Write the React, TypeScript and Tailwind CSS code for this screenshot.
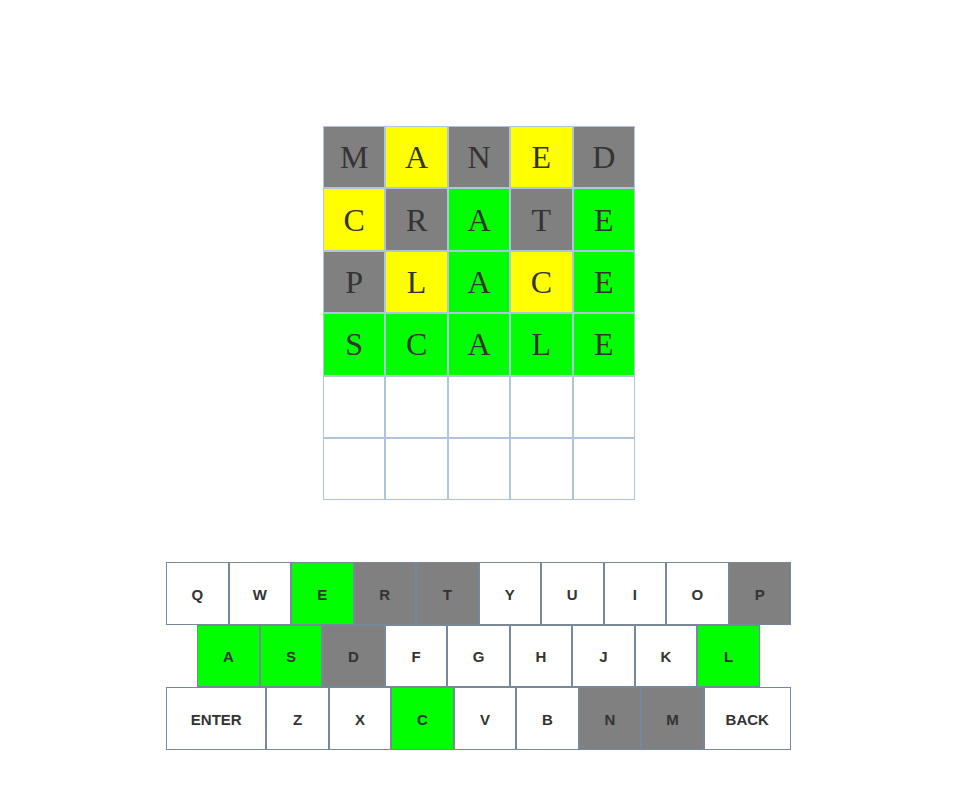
import React from "react";

type C = "g" | "y" | "x" | "w";

const rows: { l: string; c: C }[][] = [
  [
    { l: "M", c: "x" },
    { l: "A", c: "y" },
    { l: "N", c: "x" },
    { l: "E", c: "y" },
    { l: "D", c: "x" },
  ],
  [
    { l: "C", c: "y" },
    { l: "R", c: "x" },
    { l: "A", c: "g" },
    { l: "T", c: "x" },
    { l: "E", c: "g" },
  ],
  [
    { l: "P", c: "x" },
    { l: "L", c: "y" },
    { l: "A", c: "g" },
    { l: "C", c: "y" },
    { l: "E", c: "g" },
  ],
  [
    { l: "S", c: "g" },
    { l: "C", c: "g" },
    { l: "A", c: "g" },
    { l: "L", c: "g" },
    { l: "E", c: "g" },
  ],
  [
    { l: "", c: "w" },
    { l: "", c: "w" },
    { l: "", c: "w" },
    { l: "", c: "w" },
    { l: "", c: "w" },
  ],
  [
    { l: "", c: "w" },
    { l: "", c: "w" },
    { l: "", c: "w" },
    { l: "", c: "w" },
    { l: "", c: "w" },
  ],
];

const bg: Record<C, string> = {
  g: "bg-[#00ff00]",
  y: "bg-[#ffff00]",
  x: "bg-[#808080]",
  w: "bg-white",
};

const keyStates: Record<string, C> = {
  E: "g",
  R: "x",
  T: "x",
  P: "x",
  A: "g",
  S: "g",
  D: "x",
  L: "g",
  C: "g",
  N: "x",
  M: "x",
};

const kb = [
  ["Q", "W", "E", "R", "T", "Y", "U", "I", "O", "P"],
  ["A", "S", "D", "F", "G", "H", "J", "K", "L"],
  ["ENTER", "Z", "X", "C", "V", "B", "N", "M", "BACK"],
];

function Key({ k }: { k: string }) {
  const st = keyStates[k] ?? "w";
  const w = k === "ENTER" ? "w-[100px]" : k === "BACK" ? "w-[87px]" : "w-[62.5px]";
  return (
    <div
      className={`${w} h-[62.5px] border border-[#778899] ${bg[st]} flex items-center justify-center pt-[3px] text-[15px] font-bold text-[#333333]`}
      style={{ fontFamily: '"Liberation Sans", Arial, sans-serif' }}
    >
      {k}
    </div>
  );
}

export default function App() {
  return (
    <div className="min-h-[801px] bg-white flex flex-col items-center pt-[126px]">
      <div className="flex flex-col w-[312px] mr-[2px]">
        {rows.map((r, i) => (
          <div key={i} className="flex">
            {r.map((c, j) => (
              <div
                key={j}
                className={`w-[62.4px] h-[62.4px] border border-[#b0c4de] ${bg[c.c]} flex items-center justify-center text-[32px] text-[#333333]`}
                style={{ fontFamily: '"Liberation Serif", "Times New Roman", serif' }}
              >
                {c.l}
              </div>
            ))}
          </div>
        ))}
      </div>
      <div className="mt-[62px] flex flex-col items-center w-[625px] mr-[3px]">
        {kb.map((r, i) => (
          <div key={i} className="flex">
            {r.map((k) => (
              <Key key={k} k={k} />
            ))}
          </div>
        ))}
      </div>
    </div>
  );
}
